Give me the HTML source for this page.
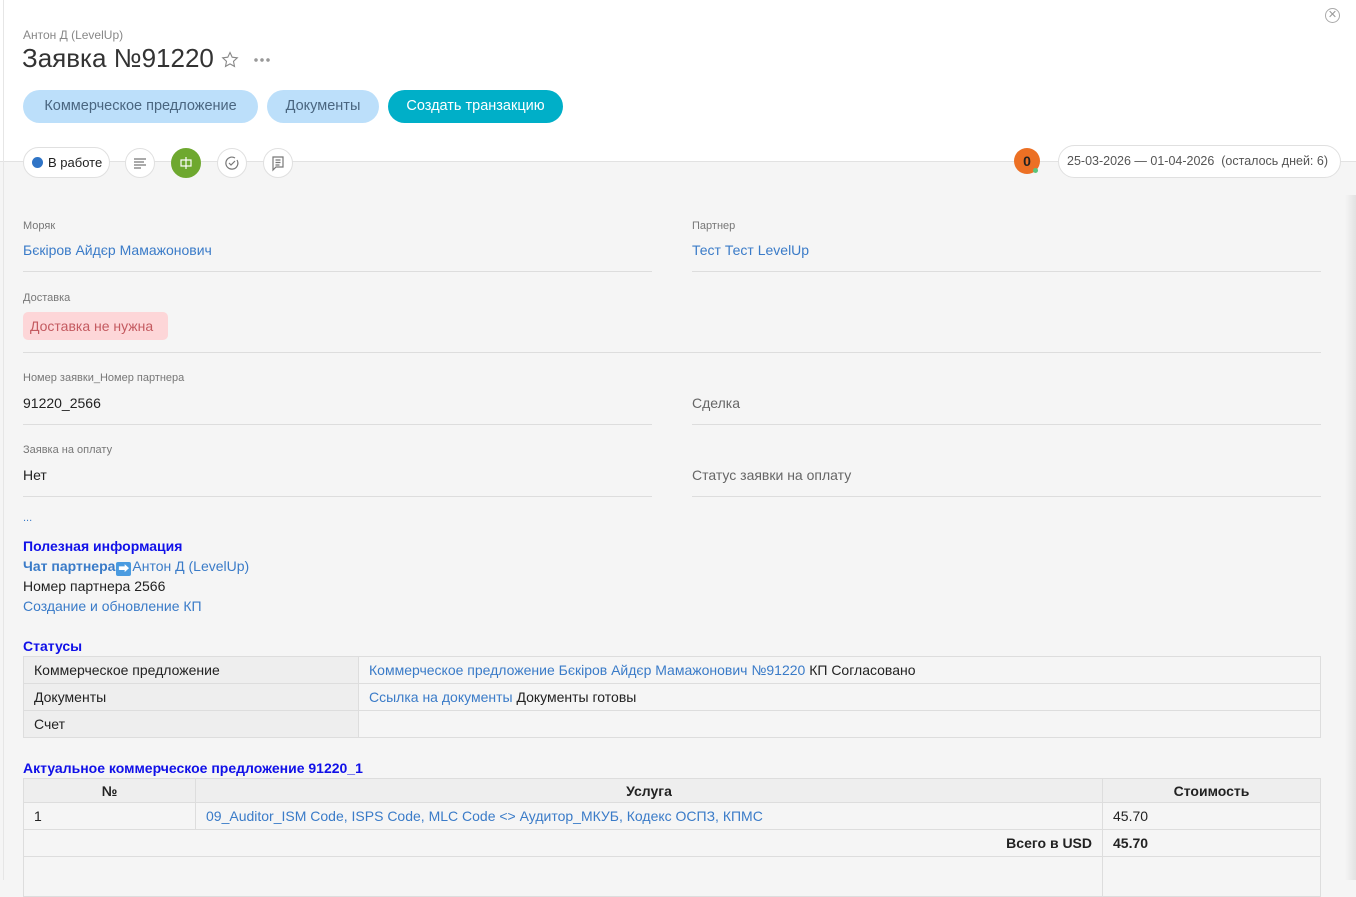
<!DOCTYPE html>
<html><head><meta charset="utf-8"><style>
*{box-sizing:border-box;margin:0;padding:0}
body{width:1356px;height:880px;overflow:hidden;background:#f5f5f5;font-family:"Liberation Sans","Noto Sans CJK SC",sans-serif;color:#222;position:relative}
.hdr{position:absolute;left:0;top:0;width:1356px;height:162px;background:#fff;border-bottom:1px solid #e2e2e2}
.lb{position:absolute;left:3px;top:0;width:1px;height:880px;background:#e6e6e6}
.abs{position:absolute}
.btn{position:absolute;top:90px;height:33px;border-radius:17px;font-size:14.5px;line-height:33px;text-align:center}
.ic{position:absolute;top:148px;width:30px;height:30px;border-radius:50%;border:1px solid #e0e0e0;background:#fff}
.lbl{position:absolute;font-size:11px;color:#777}
.val{position:absolute;font-size:14px}
.ln{position:absolute;height:1px;background:#ddd}
a,.lnk{color:#3a7bc8;text-decoration:none}
table{border-collapse:collapse;position:absolute;left:23px;width:1298px;font-size:14px}
td,th{border:1px solid #ddd;padding:0 10px;height:27px}
.bl{color:#1010e8;font-weight:bold;font-size:14px;position:absolute;left:23px}
</style></head><body>
<div class="hdr"></div>
<div class="lb"></div>
<div class="abs" style="left:23px;top:28px;font-size:12px;color:#888">Антон Д (LevelUp)</div>
<div class="abs" style="left:22px;top:43px;font-size:26px;color:#333">Заявка №91220</div>
<svg class="abs" style="left:221px;top:51px" width="18" height="18" viewBox="0 0 18 18"><path d="M9 1.5l2.2 4.7 5.1.6-3.8 3.5 1 5.1L9 12.9l-4.5 2.5 1-5.1L1.7 6.8l5.1-.6z" fill="none" stroke="#888" stroke-width="1.1"/></svg>
<div class="abs" style="left:253px;top:58px;width:18px;height:4px;background:radial-gradient(circle,#999 1.6px,transparent 2px) 0 0/6px 4px"></div>
<div class="abs" style="left:1325px;top:8px;width:15px;height:15px;border:1px solid #aaa;border-radius:50%;font-size:11px;line-height:13px;text-align:center;color:#999">✕</div>
<div class="btn" style="left:23px;width:235px;background:#bcdffa;color:#4a6680">Коммерческое предложение</div>
<div class="btn" style="left:267px;width:112px;background:#bcdffa;color:#4a6680">Документы</div>
<div class="btn" style="left:388px;width:175px;background:#00afc8;color:#fff">Создать транзакцию</div>
<div class="abs" style="left:23px;top:147px;width:87px;height:31px;border:1px solid #e0e0e0;border-radius:16px;background:#fff;font-size:13px;line-height:29px;padding-left:24px">В работе</div>
<div class="abs" style="left:32px;top:157px;width:11px;height:11px;border-radius:50%;background:#2f74c6"></div>
<div class="ic" style="left:125px"><svg width="28" height="28" viewBox="0 0 28 28" stroke="#777" stroke-width="1.2"><path d="M8 10h12M8 13h10M8 16h12M8 19h7"/></svg></div>
<div class="ic" style="left:171px;background:#6ea82f;border-color:#6ea82f"><svg width="28" height="28" viewBox="0 0 28 28" stroke="#fff" stroke-width="1.2" fill="none"><rect x="9" y="11" width="10" height="6"/><path d="M14 8v12"/></svg></div>
<div class="ic" style="left:217px"><svg width="28" height="28" viewBox="0 0 28 28" stroke="#777" stroke-width="1.2" fill="none"><path d="M19 11a6 6 0 1 1-2-2"/><path d="M11 14l2 2 4-4"/></svg></div>
<div class="ic" style="left:263px"><svg width="28" height="28" viewBox="0 0 28 28" stroke="#777" stroke-width="1.2" fill="none"><path d="M9 8h10v10h-7l-3 3z"/><path d="M11.5 11h5M11.5 13.5h5M11.5 16h4"/></svg></div>
<div class="abs" style="left:1014px;top:148px;width:26px;height:26px;border-radius:50%;background:#ec7024;color:#222;font-weight:bold;font-size:14px;line-height:26px;text-align:center">0</div>
<div class="abs" style="left:1033px;top:168px;width:5px;height:5px;border-radius:50%;background:#5ac47a"></div>
<div class="abs" style="left:1058px;top:145px;width:283px;height:33px;border:1px solid #e0e0e0;border-radius:17px;background:#fff;font-size:12.5px;line-height:31px;padding-left:8px;color:#555">25-03-2026 — 01-04-2026 &nbsp;(осталось дней: 6)</div>
<div class="abs" style="left:1345px;top:195px;width:11px;height:685px;background:linear-gradient(90deg,#f5f5f5,#e2e2e2)"></div>

<div class="lbl" style="left:23px;top:220px">Моряк</div>
<div class="val lnk" style="left:23px;top:242px">Бєкіров Айдєр Мамажонович</div>
<div class="ln" style="left:23px;top:271px;width:629px"></div>
<div class="lbl" style="left:692px;top:220px">Партнер</div>
<div class="val lnk" style="left:692px;top:242px">Тест Тест LevelUp</div>
<div class="ln" style="left:692px;top:271px;width:629px"></div>
<div class="lbl" style="left:23px;top:292px">Доставка</div>
<div class="abs" style="left:23px;top:312px;width:145px;height:28px;background:#fdd6d8;border-radius:5px;color:#c45a60;font-size:14px;line-height:28px;padding-left:7px">Доставка не нужна</div>
<div class="ln" style="left:23px;top:352px;width:1298px"></div>
<div class="lbl" style="left:23px;top:372px">Номер заявки_Номер партнера</div>
<div class="val" style="left:23px;top:395px">91220_2566</div>
<div class="ln" style="left:23px;top:424px;width:629px"></div>
<div class="val" style="left:692px;top:395px;color:#666">Сделка</div>
<div class="ln" style="left:692px;top:424px;width:629px"></div>
<div class="lbl" style="left:23px;top:444px">Заявка на оплату</div>
<div class="val" style="left:23px;top:467px">Нет</div>
<div class="ln" style="left:23px;top:496px;width:629px"></div>
<div class="val" style="left:692px;top:467px;color:#666">Статус заявки на оплату</div>
<div class="ln" style="left:692px;top:496px;width:629px"></div>
<div class="abs" style="left:23px;top:512px;font-size:11px;color:#3a7bc8">...</div>
<div class="bl" style="top:538px">Полезная информация</div>
<div class="val" style="left:23px;top:558px"><b class="lnk">Чат партнера</b><span style="display:inline-block;width:15px;height:14px;background:#4a9be0;color:#fff;font-size:11px;line-height:14px;text-align:center;vertical-align:-1px;border-radius:2px;margin:0 1px">➡</span><span class="lnk">Антон Д (LevelUp)</span></div>
<div class="val" style="left:23px;top:578px">Номер партнера 2566</div>
<div class="val lnk" style="left:23px;top:598px">Создание и обновление КП</div>
<div class="bl" style="top:638px">Статусы</div>
<table style="top:656px">
<tr><td style="width:335px;background:#eee">Коммерческое предложение</td><td><span class="lnk">Коммерческое предложение Бєкіров Айдєр Мамажонович №91220</span> КП Согласовано</td></tr>
<tr><td style="background:#eee">Документы</td><td><span class="lnk">Ссылка на документы</span> Документы готовы</td></tr>
<tr><td style="background:#eee">Счет</td><td></td></tr>
</table>
<div class="bl" style="top:760px">Актуальное коммерческое предложение 91220_1</div>
<table style="top:778px">
<tr style="background:#eee"><th style="width:172px;height:24px">№</th><th style="width:907px;height:24px">Услуга</th><th style="height:24px">Стоимость</th></tr>
<tr><td>1</td><td class="lnk">09_Auditor_ISM Code, ISPS Code, MLC Code &lt;&gt; Аудитор_МКУБ, Кодекс ОСПЗ, КПМС</td><td>45.70</td></tr>
<tr><td colspan="2" style="text-align:right;font-weight:bold">Всего в USD</td><td style="font-weight:bold">45.70</td></tr>
<tr><td colspan="2" style="height:40px"></td><td></td></tr>
</table>
</body></html>
